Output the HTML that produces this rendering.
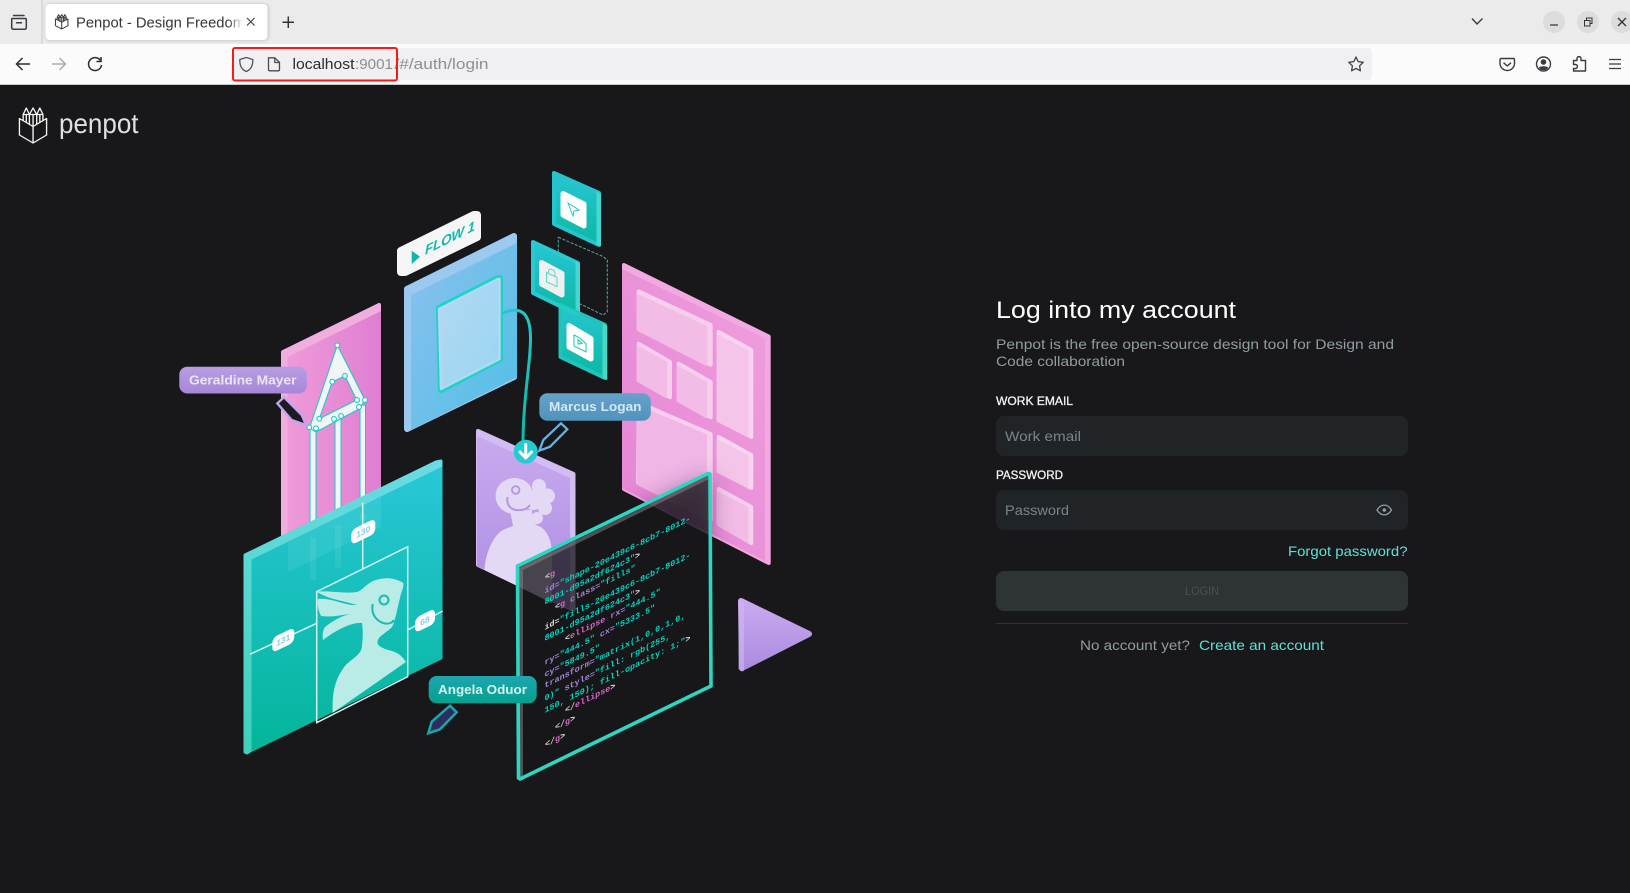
<!DOCTYPE html>
<html lang="en"><head><meta charset="utf-8"><title>Penpot - Design Freedom</title>
<style>
html,body{margin:0;padding:0;width:1630px;height:893px;overflow:hidden;background:#18181a}
svg{display:block;position:absolute;left:0;top:0}
text{font-family:"Liberation Sans",sans-serif}
.m text,text.m{font-family:"Liberation Mono",monospace;font-size:8.4px;font-weight:700}
</style></head><body>
<svg width="1630" height="893" viewBox="0 0 1630 893" xmlns="http://www.w3.org/2000/svg">
<defs>
<linearGradient id="tl" x1="0" y1="0" x2="0" y2="1"><stop offset="0" stop-color="#29c7d8"/><stop offset="1" stop-color="#03b59a"/></linearGradient>
<linearGradient id="tle" x1="0" y1="0" x2="0" y2="1"><stop offset="0" stop-color="#6adbe2"/><stop offset="1" stop-color="#3fd0bb"/></linearGradient>
<linearGradient id="sq" x1="0" y1="0" x2="0" y2="1"><stop offset="0" stop-color="#27c6d4"/><stop offset="1" stop-color="#0cb8a2"/></linearGradient>
<linearGradient id="bl" x1="0" y1="0" x2="1" y2="1"><stop offset="0" stop-color="#8cc0ef"/><stop offset="1" stop-color="#4fc0e4"/></linearGradient>
<linearGradient id="bi" x1="0" y1="0" x2="1" y2="1"><stop offset="0" stop-color="#b4d8f2"/><stop offset="1" stop-color="#98d6f2"/></linearGradient>
<linearGradient id="pk" x1="0" y1="0" x2="1" y2="0"><stop offset="0" stop-color="#ee9ad8"/><stop offset="1" stop-color="#de7fd2"/></linearGradient>
<linearGradient id="pb" x1="0" y1="1" x2="1" y2="0"><stop offset="0" stop-color="#e484d5"/><stop offset="1" stop-color="#f09fdc"/></linearGradient>
<linearGradient id="pu" x1="0" y1="0" x2="0" y2="1"><stop offset="0" stop-color="#c9aaf0"/><stop offset="1" stop-color="#ab8ce0"/></linearGradient>
<linearGradient id="g1" x1="0" y1="0" x2="0" y2="1"><stop offset="0" stop-color="#b99de2"/><stop offset="1" stop-color="#a687d8"/></linearGradient>
<linearGradient id="g2" x1="0" y1="0" x2="0" y2="1"><stop offset="0" stop-color="#66a2cb"/><stop offset="1" stop-color="#4f93bb"/></linearGradient>
<linearGradient id="g3" x1="0" y1="0" x2="0" y2="1"><stop offset="0" stop-color="#1fa6b0"/><stop offset="1" stop-color="#04a08e"/></linearGradient>
<linearGradient id="cv" x1="0" y1="0" x2="0" y2="1"><stop offset="0" stop-color="#20c8cc"/><stop offset="1" stop-color="#10b6a6"/></linearGradient>
<linearGradient id="fd" x1="0" y1="0" x2="1" y2="0"><stop offset="0" stop-color="#fff" stop-opacity="0"/><stop offset="1" stop-color="#fff"/></linearGradient>
<clipPath id="pc"><polygon points="622,263 771,335 771,565 622,490"/></clipPath>
<filter id="bs" x="-30%" y="-30%" width="160%" height="160%"><feGaussianBlur stdDeviation="12"/></filter>
<filter id="ts" x="-10%" y="-30%" width="120%" height="170%"><feGaussianBlur stdDeviation="1.5"/></filter>
<g id="logo" fill="none" stroke-linejoin="round" stroke-linecap="round">
<path d="M.9 12 14 20 27 12V28.500L14 36.500.9 28.500ZM14 20V36.500"/>
<path d="M4.500 14V8L7.500 1.500 10.500 8V17.500M10.500 8 14 1.500 17.500 8V17.500M17.500 8 20.500 1.500 23.500 8V14M4.500 8H23.500M7.500 8V15.500M14 8V20M20.500 8V15.500"/>
</g>
</defs>

<!-- page -->
<rect width="1630" height="893" fill="#18181a"/>

<!-- browser chrome -->
<rect width="1630" height="44" fill="#ebebeb"/>
<rect y="44" width="1630" height="40" fill="#fbfbfb"/>
<rect y="84" width="1630" height="1" fill="#c8c8c8"/>
<rect x="41.500" y="0" width="1" height="44" fill="#c9c9c9"/>
<path d="M13.500 15.500H24M12 18.500H25.500Q26.300 18.500 26.300 19.500V27.500Q26.300 29.300 24.500 29.300H13.500Q11.700 29.300 11.700 27.500V19.500Q11.700 18.500 12 18.500ZM16.500 22.800H21.500" fill="none" stroke="#3c3c42" stroke-width="1.500" stroke-linecap="round"/>
<rect x="45.500" y="4" width="223" height="36.500" rx="4" fill="#000" opacity=".18" filter="url(#ts)"/>
<rect x="45.500" y="4" width="222" height="36" rx="4" fill="#fff"/>
<use href="#logo" transform="translate(55 14) scale(.48,.41)" stroke="#3c3c42" stroke-width="2.200"/>
<text x="76" y="27.500" font-size="15" fill="#35353b" textLength="169" lengthAdjust="spacingAndGlyphs">Penpot - Design Freedom</text>
<rect x="228" y="6" width="15" height="32" fill="url(#fd)"/>
<rect x="243" y="6" width="21" height="32" fill="#fff"/>
<path d="M247 18 254.500 25.500M254.500 18 247 25.500" stroke="#444" stroke-width="1.200"/>
<path d="M288.300 16.500V28M282.500 22.300H294" stroke="#333" stroke-width="1.500"/>

<path d="M16.500 64H30M22.500 58 16.500 64 22.500 70" fill="none" stroke="#2d2d33" stroke-width="1.500"/>
<path d="M52 64H65.500M59.500 58 65.500 64 59.500 70" fill="none" stroke="#acacb0" stroke-width="1.500"/>
<path d="M100.500 60.500A6.500 6.500 0 1 0 101.500 65M101 57V61.500H96.500" fill="none" stroke="#2d2d33" stroke-width="1.500"/>

<rect x="232" y="48" width="1140" height="32" rx="4" fill="#f0f0f2"/>
<path d="M246.300 57.500 252.800 59.500C253 66 250.500 69.800 246.300 71.500 242 69.800 239.600 66 239.800 59.500Z" fill="none" stroke="#55555b" stroke-width="1.300" stroke-linejoin="round"/>
<path d="M268.500 57.800H274.800L279.500 62.300V69.500Q279.500 70.800 278.200 70.800H269.800Q268.500 70.800 268.500 69.500ZM274.800 58V62.500H279.300" fill="none" stroke="#4a4a50" stroke-width="1.300" stroke-linejoin="round"/>
<text x="292.500" y="69.200" font-size="15" fill="#2b2b31" textLength="62" lengthAdjust="spacingAndGlyphs">localhost</text>
<text x="355" y="69.200" font-size="15" fill="#8e8e93" textLength="38" lengthAdjust="spacingAndGlyphs">:9001</text>
<text x="394.500" y="69.200" font-size="15" fill="#8e8e93" textLength="94" lengthAdjust="spacingAndGlyphs">/#/auth/login</text>
<rect x="233" y="48" width="164" height="32.500" rx="2" fill="none" stroke="#f01d1d" stroke-width="2"/>
<path d="M1356 57 1358.200 61.600 1363.200 62.300 1359.600 65.800 1360.400 70.800 1356 68.400 1351.600 70.800 1352.400 65.800 1348.800 62.300 1353.800 61.600Z" fill="none" stroke="#3f3f45" stroke-width="1.300" stroke-linejoin="round"/>

<path d="M1472 18.500 1477 24 1482.500 18.500" fill="none" stroke="#3a3a40" stroke-width="1.400"/>
<circle cx="1554" cy="22" r="11" fill="#dcdcdc"/><circle cx="1588" cy="22" r="11" fill="#dcdcdc"/><circle cx="1622" cy="22" r="11" fill="#dcdcdc"/>
<path d="M1550 25H1558" stroke="#333" stroke-width="1.200"/>
<path d="M1584.500 20.500H1590V26H1584.500ZM1586.500 20V18H1592V23.500H1590.500" fill="none" stroke="#333" stroke-width="1"/>
<path d="M1618 18 1626 26M1626 18 1618 26" stroke="#333" stroke-width="1.300"/>

<path d="M1501 58.500H1513.500Q1514.500 58.500 1514.500 60V63.500C1514.500 67.500 1511 70.500 1507.300 70.500 1503.500 70.500 1500 67.500 1500 63.500V60Q1500 58.500 1501 58.500ZM1503.500 62.700 1507.300 66 1511 62.700" fill="none" stroke="#3b3b41" stroke-width="1.400" stroke-linejoin="round"/>
<circle cx="1543.500" cy="64" r="7" fill="none" stroke="#3b3b41" stroke-width="1.400"/>
<circle cx="1543.500" cy="62" r="2.800" fill="#3b3b41"/><path d="M1538.800 67.800C1540 65.800 1547 65.800 1548.200 67.800L1546 70H1541Z" fill="#3b3b41"/>
<path d="M1573.500 60.500H1577V58.500C1577 56 1581 56 1581 58.500V60.500H1585.500V71H1573.500V68.500H1575.500C1578 68.500 1578 64.500 1575.500 64.500H1573.500Z" fill="none" stroke="#3b3b41" stroke-width="1.400" stroke-linejoin="round"/>
<path d="M1609 59.500H1621M1609 64H1621M1609 68.500H1621" stroke="#3b3b41" stroke-width="1.300"/>

<!-- logo -->
<use href="#logo" transform="translate(18.500 106.500) scale(1.04,1)" stroke="#f4f4f4" stroke-width="1.300"/>
<text x="59" y="133" font-size="28" fill="#e0e0e0" textLength="79.500" lengthAdjust="spacingAndGlyphs">penpot</text>

<!-- illustration: left pink + pencil -->
<polygon points="283,352 379,305 379,525 283,571" fill="#f0aede" stroke="#f0aede" stroke-width="4" stroke-linejoin="round"/>
<polygon points="287.500,357 381,311 381,526 287.500,570" fill="url(#pk)"/>
<g fill="#f1f5f5" stroke="#1ac8c8" stroke-width="1">
<rect x="310" y="428" width="6" height="152"/>
<rect x="335" y="418" width="6" height="150"/>
<rect x="360" y="405" width="5.500" height="115"/>
<path fill-rule="evenodd" d="M337.300 345.300 365 400 359 409 316 432 309.500 428ZM332.300 381.700 345 376 356.700 400 319.300 418.700Z"/>
</g>
<g fill="#fff" stroke="#1ac8c8" stroke-width="1.100">
<circle cx="337.300" cy="345.300" r="2.400"/><circle cx="332.300" cy="381.700" r="2.400"/><circle cx="345" cy="376" r="2.400"/><circle cx="357" cy="400" r="2.400"/><circle cx="365" cy="400" r="2.400"/><circle cx="359" cy="407" r="2.400"/><circle cx="319.300" cy="418.700" r="2.400"/><circle cx="334" cy="419" r="2.400"/><circle cx="341" cy="416" r="2.400"/><circle cx="309.300" cy="427.300" r="2.400"/><circle cx="316" cy="428.300" r="2.400"/>
</g>

<!-- blue panel -->
<polygon points="407,289 514,236 514,377 407,429" fill="#9cc9f0" stroke="#9cc9f0" stroke-width="6" stroke-linejoin="round"/>
<polygon points="411,295 517,243 517,377 411,430" fill="url(#bl)"/>
<polygon points="439,308 498,278 500,278 500,359 441,390" fill="#1bd3c6" stroke="#1bd3c6" stroke-width="6" stroke-linejoin="round"/>
<polygon points="439,309 498,279 499.500,279 499.500,359 441,389" fill="url(#bi)" stroke="#b0d9f2" stroke-width="2.500" stroke-linejoin="round"/>
<path d="M503 313C512 309 522 308 527 318 532 328 531 345 528 372 525 400 523 420 523 445" fill="none" stroke="url(#cv)" stroke-width="3"/>

<!-- FLOW label -->
<polygon points="401,251 474,215 477,215 477,237 405,272 401,272" fill="#f6f6f6" stroke="#f6f6f6" stroke-width="8" stroke-linejoin="round"/>
<polygon points="411.700,250.700 420,256.700 411.700,264" fill="#0cb8ac"/>
<text transform="matrix(1,-.5,0,1,425,255)" font-size="13.500" font-weight="700" font-style="italic" fill="#0cb8ac" textLength="50">FLOW 1</text>

<!-- teal squares -->
<polygon points="554,173 599,193 599,245 554,224" fill="url(#sq)" stroke="#26c4cf" stroke-width="4" stroke-linejoin="round"/>
<polygon points="596.500,191.500 601,194 601,246 596.500,245" fill="#4ad6d0"/>
<polygon points="563,193.500 584,204 584,226 563,215" fill="#fff" stroke="#fff" stroke-width="5" stroke-linejoin="round"/>
<path d="M568 203 579 210 574 211 573 216Z" fill="none" stroke="#26c8c4" stroke-width="1"/>
<polygon points="558.300,237.300 603,256.500 607.300,260 607.300,312 603,315 558.300,293.300 " fill="none" stroke="#4fa9a0" stroke-width="1" stroke-dasharray="3 1.500"/>
<polygon points="533,242 578,263 578,315 533,293" fill="url(#sq)" stroke="#2ac8d0" stroke-width="4" stroke-linejoin="round"/>
<polygon points="575.500,261 580,264 580,316 575.500,314.500" fill="#4ad6d0" opacity=".9"/>
<polygon points="541.500,262.500 562,273.500 562,295 541.500,284" fill="#f0f0f0" stroke="#f0f0f0" stroke-width="5" stroke-linejoin="round"/>
<path d="M546.500 272.500 557 277.500V286.500L546.500 282ZM548.500 273V271C549 267.500 555 269.500 555 273.500V276" fill="none" stroke="#5dd6ce" stroke-width="1"/>
<polygon points="560.500,305 605,325 605,378 560.500,357" fill="url(#sq)" stroke="#20c4bc" stroke-width="4" stroke-linejoin="round"/>
<polygon points="602.500,323 607.300,326 607.300,380 602.500,378" fill="#4ad6c4"/>
<polygon points="569,325.500 591,338.500 591,359 569,347" fill="#fff" stroke="#fff" stroke-width="5" stroke-linejoin="round"/>
<path d="M574 335 580 338 586 344V352L574 346ZM578 339.500 582 343.500 578 344Z" fill="none" stroke="#1cc6bc" stroke-width="1"/>
<polygon points="558,303 580,313 580,316.500 560,309 558,306" fill="#25d3bf" opacity=".7"/>

<!-- big pink -->
<polygon points="624,265 768.700,336.500 768.700,563 624,489" fill="#f2a8e0" stroke="#f2a8e0" stroke-width="4" stroke-linejoin="round"/>
<polygon points="622,269 765,338.500 765,561 622,488" fill="url(#pb)"/>
<g stroke-width="4" stroke-linejoin="round">
<polygon points="638.700,291.500 710.700,325 710.700,364.700 638.700,328" fill="#f6cfec" stroke="#f6cfec"/>
<polygon points="718.700,332 751.300,350 751.300,437 718.700,420" fill="#f8d4ee" stroke="#f8d4ee"/>
<polygon points="638.700,343.700 670,362 670,397.300 638.700,379.700" fill="#f6cfec" stroke="#f6cfec"/>
<polygon points="678.700,363.700 710.700,382 710.700,417.300 678.700,399.700" fill="#f6cfec" stroke="#f6cfec"/>
<polygon points="638.700,402.700 710.700,434 710.700,520 638,483" fill="#f6cfec" stroke="#f6cfec"/>
<polygon points="718.700,437 751.300,455 751.300,488 718.700,471" fill="#f8d4ee" stroke="#f8d4ee"/>
<polygon points="718.700,489 751.300,507 751.300,543 718.700,523" fill="#f6cfec" stroke="#f6cfec"/>
</g>
<g stroke-width="2" stroke-linejoin="round">
<polygon points="637.700,295 706.500,327 706.500,365 637.700,330" fill="#f2bce6" stroke="#f2bce6"/>
<polygon points="717.700,335.500 747.500,351 747.500,436 717.700,421" fill="#f5c4e9" stroke="#f5c4e9"/>
<polygon points="637.700,347 666,362.500 666,397 637.700,381" fill="#f2bce6" stroke="#f2bce6"/>
<polygon points="677.700,367 706,382.500 706,417 677.700,401" fill="#f2bce6" stroke="#f2bce6"/>
<polygon points="637.700,406 706,435 706,519 637.700,484" fill="#f0b6e6" stroke="#f0b6e6"/>
<polygon points="717.700,440.500 747.500,456 747.500,487 717.700,472" fill="#f5c4e9" stroke="#f5c4e9"/>
<polygon points="717.700,492.500 747.500,508 747.500,542 717.700,525" fill="#f2bce6" stroke="#f2bce6"/>
</g>
<g clip-path="url(#pc)"><polygon points="516,570 710,476 710,620 516,720" fill="#5a2a5a" opacity=".55" filter="url(#bs)"/></g>

<!-- purple panel -->
<polygon points="478,431 573.500,474 573.500,610 478,565" fill="#d2bcf2" stroke="#d2bcf2" stroke-width="4" stroke-linejoin="round"/>
<polygon points="477,436 570,478 570,610 477,566" fill="url(#pu)"/>
<g fill="#e3d9f5">
<path d="M484.500 570C485 556 492 536 503 530 507 528 511 527 513 526L510 510H532L532 520C534 524 538 526 541 527 548 532 552 542 552 555V603Z"/>
<ellipse cx="514.500" cy="496" rx="19" ry="18"/>
<circle cx="539" cy="486" r="7"/><circle cx="547.500" cy="496" r="7.500"/><circle cx="545" cy="508" r="7"/><circle cx="537" cy="518" r="6"/><circle cx="533" cy="500" r="10"/>
</g>
<circle cx="515.700" cy="490" r="3.800" fill="none" stroke="#b596e6" stroke-width="1.800"/>
<path d="M507.500 497C506 507 513 511 520 510 525 510 528 508 530 505" fill="none" stroke="#b596e6" stroke-width="2"/>

<!-- arrow circle -->
<circle cx="525.700" cy="451.700" r="12" fill="#25cbd0"/>
<path d="M525.700 444.500V457.500M520 452 525.700 458 531.500 452" fill="none" stroke="#fff" stroke-width="3" stroke-linecap="round" stroke-linejoin="round"/>

<!-- teal panel -->
<polygon points="245,558 439,464 441,464 441,658 248,752 245,752" fill="url(#tl)" stroke="url(#tl)" stroke-width="3" stroke-linejoin="round"/>
<polygon points="288,537 381,492 381,527 288,572" fill="#fff" opacity=".07"/>
<g fill="#fff" opacity=".07">
<rect x="310" y="537" width="6" height="43"/><rect x="335" y="525" width="6" height="43"/><rect x="360" y="513" width="5.500" height="7"/>
</g>
<polygon points="245,555 436,462 441,461 441,465.500 250,558.500 250,751 247,753 245,752" fill="url(#tle)" stroke="url(#tle)" stroke-width="3" stroke-linejoin="round"/>
<g fill="none" stroke="#d6f5f1" stroke-width="1.500">
<polygon points="316.700,591.700 407.700,546.700 407.700,676.700 316.700,722.700"/>
<path d="M362.700 502.700V568.300M250 654.300 316.700 623.300M407.700 630 442.700 611"/>
</g>
<path d="M332.700 713C332 695 334 680 345 666 352 658 362 655 362 645 363 638 363 631 362 623 352 622 336 630 323 640 322 634 323 630 325 627 335 619 347 613 358 613 345 614 332 618 321 616 318 610 317 604 318 599 330 597 345 606 357 605 340 600 328 599 317.300 592 325 590 345 594 356.700 592 362 591 365 585 373 581 382 578 392 576 403.300 583 404 588 401 592 400 598 397 610 395 622 392 627 386 633 379 636 378 640 376 645 380 647 388 650 398 652 402 656 406 662 407 668 407.500 677L332.700 713Z" fill="#b9ece7"/>
<circle cx="384" cy="600" r="4.500" fill="#b9ece7" stroke="#18bbac" stroke-width="2"/>
<path d="M372.700 604C371 613 375 620 383 623 389 625 393 622 394 620" fill="none" stroke="#18bbac" stroke-width="2"/>
<g fill="#fff">
<rect transform="matrix(1,-.488,0,1,363.300,531.700)" x="-12" y="-7.500" width="24" height="15" rx="5"/>
<rect transform="matrix(1,-.488,0,1,283.300,640)" x="-11" y="-7.500" width="22" height="15" rx="5"/>
<rect transform="matrix(1,-.488,0,1,425,620.700)" x="-10" y="-7.500" width="20" height="15" rx="5"/>
</g>
<g font-size="8.500" font-weight="700" fill="#8ccaf0" text-anchor="middle">
<text transform="matrix(1,-.488,0,1,363.300,534.700)">130</text>
<text transform="matrix(1,-.488,0,1,283.300,643)">131</text>
<text transform="matrix(1,-.488,0,1,425,623.700)">68</text>
</g>

<!-- play triangle -->
<polygon points="741,601 809,634 742,668" fill="url(#pu)" stroke="url(#pu)" stroke-width="6" stroke-linejoin="round"/>
<polygon points="738.500,600 744,603 744,671 741,671.500 738.500,669" fill="#d0b8f2" opacity=".6"/>

<!-- code panel -->
<polygon points="517.500,566 709,472 711,686 519.500,778" fill="#18181a" opacity=".77"/>
<polygon points="519,568 709,475 709,479 523,570 523,776 519,778" fill="#8a8a8a" opacity=".5"/>
<polygon points="517.500,566 708,473.500 710,474 711,686 520,779 518.500,778" fill="none" stroke="#2dd6c2" stroke-width="3.600" stroke-linejoin="round"/>
<g class="m">
<text transform="matrix(1,-.5,0,1,545,580)" fill="#ddd">&lt;<tspan fill="#d866cc">g</tspan></text>
<text transform="matrix(1,-.5,0,1,544.500,593.500)" fill="#00d2c2"><tspan fill="#a484dc">id=</tspan>"shape-20e439c6-8cb7-8012-</text>
<text transform="matrix(1,-.5,0,1,544.500,604.500)" fill="#00d2c2">8001-d95a2df624c3"<tspan fill="#ddd">&gt;</tspan></text>
<text transform="matrix(1,-.5,0,1,555,610)" fill="#00d2c2"><tspan fill="#ddd">&lt;</tspan><tspan fill="#d866cc">g</tspan> <tspan fill="#a484dc">class=</tspan>"fills"</text>
<text transform="matrix(1,-.5,0,1,544.500,630)" fill="#00d2c2"><tspan fill="#ddd">id=</tspan>"fills-20e439c6-8cb7-8012-</text>
<text transform="matrix(1,-.5,0,1,544.500,641)" fill="#00d2c2">8001-d95a2df624c3"<tspan fill="#ddd">&gt;</tspan></text>
<text transform="matrix(1,-.5,0,1,565,641.500)" fill="#00d2c2"><tspan fill="#ddd">&lt;</tspan><tspan fill="#d866cc">ellipse</tspan> <tspan fill="#a484dc">rx=</tspan>"444.5"</text>
<text transform="matrix(1,-.5,0,1,544.500,665)" fill="#00d2c2"><tspan fill="#a484dc">ry=</tspan>"444.5" <tspan fill="#a484dc">cx=</tspan>"5333.5"</text>
<text transform="matrix(1,-.5,0,1,544.500,677)" fill="#00d2c2"><tspan fill="#a484dc">cy=</tspan>"5849.5"</text>
<text transform="matrix(1,-.5,0,1,544.500,688)" fill="#00d2c2"><tspan fill="#a484dc">transform=</tspan>"matrix(1,0,0,1,0,</text>
<text transform="matrix(1,-.5,0,1,544.500,701)" fill="#00d2c2">0)" <tspan fill="#a484dc">style=</tspan>"fill: rgb(255,</text>
<text transform="matrix(1,-.5,0,1,544.500,713)" fill="#00d2c2">150, 150); fill-opacity: 1;"<tspan fill="#ddd">&gt;</tspan></text>
<text transform="matrix(1,-.5,0,1,565,713)" fill="#ddd">&lt;/<tspan fill="#d866cc">ellipse</tspan>&gt;</text>
<text transform="matrix(1,-.5,0,1,555,730)" fill="#ddd">&lt;/<tspan fill="#d866cc">g</tspan>&gt;</text>
<text transform="matrix(1,-.5,0,1,545,747.300)" fill="#ddd">&lt;/<tspan fill="#d866cc">g</tspan>&gt;</text>
</g>

<!-- tooltips -->
<rect x="179.300" y="366.700" width="127.500" height="26.800" rx="8" fill="url(#g1)"/>
<text x="189" y="384.500" font-size="13" font-weight="700" fill="#ebe3f7" textLength="107.500" lengthAdjust="spacingAndGlyphs">Geraldine Mayer</text>
<polygon points="277.300,403.300 284,397.300 301.700,415 306,425 291.700,420" fill="#1d1b22" stroke="#c3a4ee" stroke-width="2.300"/>
<rect x="539.300" y="393.300" width="111.500" height="27.400" rx="8" fill="url(#g2)"/>
<text x="549" y="411" font-size="13" font-weight="700" fill="#d2e8f6" textLength="92.500" lengthAdjust="spacingAndGlyphs">Marcus Logan</text>
<polygon points="539.300,450.700 543.300,440 561,423.300 567.300,429.300 550,446.700" fill="#18181a" stroke="#66b2e2" stroke-width="2.300"/>
<rect x="428.700" y="676" width="108" height="27.300" rx="8" fill="url(#g3)"/>
<text x="438" y="694" font-size="13" font-weight="700" fill="#d4f2ee" textLength="89" lengthAdjust="spacingAndGlyphs">Angela Oduor</text>
<polygon points="428.300,733.300 431.700,721.700 450,705.700 456.700,712.300 440,729.300" fill="#2b2f60" stroke="#18a8ac" stroke-width="2.500"/>

<!-- form -->
<g>
<text x="996" y="318" font-size="24" fill="#fff" textLength="240" lengthAdjust="spacingAndGlyphs">Log into my account</text>
<text x="996" y="349" font-size="14" fill="#8f9da3" textLength="398" lengthAdjust="spacingAndGlyphs">Penpot is the free open-source design tool for Design and</text>
<text x="996" y="366" font-size="14" fill="#8f9da3" textLength="129" lengthAdjust="spacingAndGlyphs">Code collaboration</text>
<text x="996" y="405" font-size="12" fill="#f2f2f2" stroke="#f2f2f2" stroke-width=".3" textLength="77" lengthAdjust="spacingAndGlyphs">WORK EMAIL</text>
<rect x="996" y="416" width="412" height="40" rx="8" fill="#212426"/>
<text x="1005" y="441" font-size="14" fill="#7b8387" textLength="76" lengthAdjust="spacingAndGlyphs">Work email</text>
<text x="996" y="479" font-size="12" fill="#f2f2f2" stroke="#f2f2f2" stroke-width=".3" textLength="67" lengthAdjust="spacingAndGlyphs">PASSWORD</text>
<rect x="996" y="490" width="412" height="40" rx="8" fill="#212426"/>
<text x="1005" y="515" font-size="14" fill="#7b8387" textLength="64" lengthAdjust="spacingAndGlyphs">Password</text>
<path d="M1377 510C1381 503.500 1387.500 503.500 1391.500 510 1387.500 516.500 1381 516.500 1377 510Z" fill="none" stroke="#8f9da3" stroke-width="1.300"/>
<circle cx="1384.300" cy="510" r="1.800" fill="#8f9da3"/>
<text x="1288" y="556" font-size="14" fill="#5fe0d6" textLength="119.500" lengthAdjust="spacingAndGlyphs">Forgot password?</text>
<rect x="996" y="571" width="412" height="40" rx="8" fill="#2e3434"/>
<text x="1185" y="595" font-size="11.500" fill="#4a5153" textLength="34" lengthAdjust="spacingAndGlyphs">LOGIN</text>
<rect x="996" y="623" width="412" height="1" fill="#2e3434"/>
<text x="1080" y="650" font-size="14" fill="#8f9da3" textLength="110" lengthAdjust="spacingAndGlyphs">No account yet?</text>
<text x="1199" y="650" font-size="14" fill="#5fe0d6" textLength="125" lengthAdjust="spacingAndGlyphs">Create an account</text>
</g>
</svg>
</body></html>
